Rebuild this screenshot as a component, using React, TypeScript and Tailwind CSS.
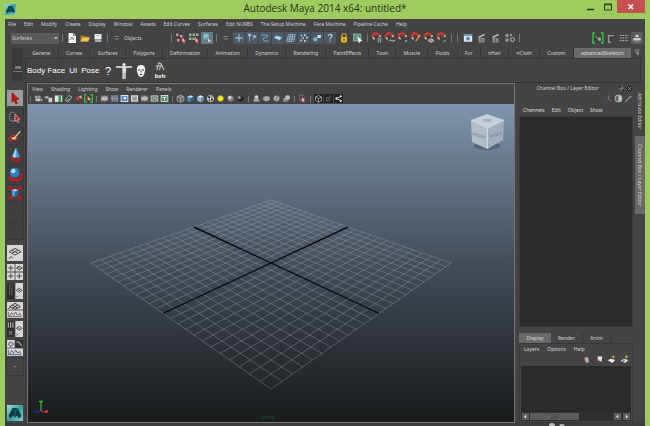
import type { ReactNode } from "react";

const menus = [
  "File", "Edit", "Modify", "Create", "Display", "Window", "Assets", "Edit Curves",
  "Surfaces", "Edit NURBS", "The Setup Machine", "Face Machine", "Pipeline Cache", "Help",
];

const shelfTabs = [
  "General", "Curves", "Surfaces", "Polygons", "Deformation", "Animation", "Dynamics",
  "Rendering", "PaintEffects", "Toon", "Muscle", "Fluids", "Fur", "nHair", "nCloth", "Custom",
];

/** Red horseshoe magnet shared by the snap icons */
const magnet = (
  <>
    <path d="M2.5 6.5 A3.2 3.2 0 0 1 7.5 2.5 L9 4.5" fill="none" stroke="#c43a31" strokeWidth="2.4" />
    <path d="M2 5.5l1.6 1.8M8.2 4.6l1.6-.8" stroke="#ddd" strokeWidth="1.2" />
  </>
);

const cube = (top: string, left: string, right: string) => (
  <>
    <path d="M6 1.5L10.5 3.5 6 5.5 1.5 3.5z" fill={top} />
    <path d="M1.5 3.5L6 5.5V11L1.5 8.8z" fill={left} />
    <path d="M10.5 3.5L6 5.5V11l4.5-2.2z" fill={right} />
  </>
);

const persp = (
  <g fill="none" stroke="#444" strokeWidth=".7">
    <path d="M1.5 5L6 2.5 10.5 5 6 7.5zM3.7 3.8L8.2 6.2M8.2 3.8L3.7 6.2" />
    <path d="M3 8.5l-1.5 2M3 8.5l1.5 1.5" />
  </g>
);

/** All icons are drawn on a 12x12 grid */
const icons: Record<string, ReactNode> = {
  newScene: (
    <>
      <path d="M2.5 1h5L10 3.5V11H2.5z" fill="#f2f2f2" />
      <path d="M7.5 1v2.5H10M4 8l2-3 1 2 1.5 1" fill="none" stroke="#555" strokeWidth=".8" />
    </>
  ),
  open: (
    <>
      <path d="M1.5 3.5h3l1 1h4v5h-8z" fill="#a67c1c" />
      <path d="M3.5 5.5H11L9 9.5H1.5z" fill="#edc552" />
    </>
  ),
  save: (
    <>
      <rect x="2.5" y="2" width="7" height="5.5" rx=".5" fill="#e8edf2" />
      <path d="M3 9h6.5" stroke="#b8bcc0" strokeWidth="1.8" />
      <path d="M3.5 3.5h4.5" stroke="#9aa" strokeWidth=".6" />
    </>
  ),
  grip: <path d="M3.5 4.5h4.5M3.5 7h4.5" stroke="#888" strokeWidth=".9" />,
  hierarchy: (
    <>
      <path d="M1 1.5h2.5V4H1zM5 3h2.5v2.5H5zM2 7h2.5v2.5H2z" fill="#d88f94" />
      <path d="M7 5l4 4-1.8.2 1 1.8-1.2.4-.8-1.7L7 10z" fill="#e6b3b3" stroke="#a33" strokeWidth=".5" />
    </>
  ),
  objectMode: (
    <>
      <path d="M1 1.5h2.5V4H1zM4.5 1.5H7V4H4.5zM8 1.5h2.5V4H8zM1 5.5h2.5V8H1zM4.5 5.5H7V8H4.5z" fill="#93b89a" />
      <path d="M7 5l4 4-1.8.2 1 1.8-1.2.4-.8-1.7L7 10z" fill="#e6b3b3" stroke="#a33" strokeWidth=".5" />
    </>
  ),
  component: (
    <>
      <circle cx="5" cy="4.5" r="3.2" fill="#5fa3b8" />
      <path d="M3 3h4M2.5 5h5" stroke="#d2eef5" strokeWidth=".8" />
      <path d="M6 5l4.5 4.5-2 .2L7.500 11z" fill="#eee" stroke="#355" strokeWidth=".4" />
    </>
  ),
  plus: <path d="M6 1.5v9M1.500 6h9" stroke="#8ab4d6" strokeWidth="1.6" />,
  joint: (
    <>
      <path d="M3 10V2.500L9.500 4L7 8" fill="none" stroke="#8ab4d6" strokeWidth="1" />
      <path d="M1.500 1h3v3h-3zM8 3h3v2.500H8z" fill="#a9cce8" />
    </>
  ),
  curve: <path d="M2 2.500h6c2 0 1 3-1.500 3S3 9.500 5.500 9.500H10" fill="none" stroke="#8ab4d6" strokeWidth="1.100" />,
  surface: <path d="M1 6l3-3 3.500 1L11 5.500 8 9 4.500 7.500z" fill="#a5d2f0" stroke="#4b7fa5" strokeWidth=".6" />,
  lattice: <path d="M3 2h8L9 10H1zM2.500 4.700h8M2 7.300h8M5.700 2l-2 8M8.300 2l-2 8" fill="none" stroke="#9cc4e4" strokeWidth=".9" />,
  particles: <path d="M2 2h2v2H2zM6 1.500h2v2H6zM4 5h2v2H4zM8.500 4.500h2v2h-2zM1.500 8h2v2h-2zM6 8.500h2v2H6z" fill="#b9dbf2" />,
  render: (
    <>
      <circle cx="4" cy="7.500" r="2.500" fill="#83b5d8" />
      <path d="M6.500 2.500h4v3.500h-4z" fill="#cfe3f2" />
    </>
  ),
  help: <path d="M3.800 4c0-3 4.600-3 4.600-.4C8.400 5.500 6 5.500 6 7.500M6 9v1.500" fill="none" stroke="#c4dcee" strokeWidth="1.300" />,
  lock: (
    <>
      <path d="M4 5.500V3.500a2 2 0 0 1 4 0v2" fill="none" stroke="#d9a520" strokeWidth="1.200" />
      <rect x="3" y="5" width="6" height="5.500" rx="1" fill="#e8b522" />
      <path d="M6 7v2" stroke="#5a4000" strokeWidth="1.100" />
    </>
  ),
  highlight: (
    <>
      <rect x="1.500" y="2" width="7.500" height="7" fill="#5f8f7c" stroke="#9cc" strokeWidth=".6" />
      <path d="M5 4l5.500 5-2.200.2L7 11.500z" fill="#f2f2f2" />
    </>
  ),
  snapGrid: <>{magnet}<path d="M6 7h5M6 9h5M7.500 5.500V11M9.500 5.500V11" stroke="#aaa" strokeWidth=".6" /></>,
  snapCurve: <>{magnet}<path d="M5 9c2-3 3 2 6-1" fill="none" stroke="#ccc" strokeWidth="1" /></>,
  snapPoint: <>{magnet}<circle cx="9" cy="9" r="1.100" fill="#7fb0dd" /></>,
  snapView: <>{magnet}<path d="M5 9l5-7 1 1-4.500 6.500z" fill="#d98c4a" /></>,
  snapPlane: <>{magnet}<path d="M5 8.500L8 6.500l3 2-3 2z" fill="#888" stroke="#ddd" strokeWidth=".7" /></>,
  makeLive: <>{magnet}<path d="M7 9.500l3-1" stroke="#999" strokeWidth="1" /></>,
  history: (
    <>
      <rect x="1" y="1.500" width="10" height="9" fill="#dce6ef" />
      <path d="M1 2.500h10" stroke="#4b78a8" strokeWidth="1.600" />
      <circle cx="6" cy="6.800" r="2.200" fill="#4f86b8" />
    </>
  ),
  clapper: (
    <>
      <path d="M2.500 6h6v4.500h-6z" fill="#888" />
      <path d="M2.500 5.500l6-3" stroke="#bbb" strokeWidth="1.500" />
      <path d="M5.500 7v2.500" stroke="#444" strokeWidth=".8" />
    </>
  ),
  settings: (
    <>
      <path d="M1.500 2h3v3h-3zM1.500 6.500h3v3h-3zM6 2h2v2H6z" fill="#999" />
      <circle cx="8.500" cy="7.500" r="2" fill="none" stroke="#bbb" strokeWidth="1" />
    </>
  ),
  bracket: (
    <>
      <path d="M3 1H1v10h2M9 1h2v10H9" fill="none" stroke="#25d43a" strokeWidth="1.300" />
      <path d="M3.500 4l5 5" stroke="#9a9" strokeWidth="1" />
      <circle cx="7.500" cy="7" r="1.700" fill="#9aa89a" />
    </>
  ),
  bracketRed: (
    <>
      <path d="M4 1H1v10h3M8 1h3v10H8" fill="none" stroke="#22e03c" strokeWidth="1.500" />
      <path d="M4 3h3v6H4z" fill="#d0423a" />
      <path d="M6 4l3 4H6z" fill="#eee" />
    </>
  ),
  panelA: <path d="M3 11V3h6.500M3 3v8h3" fill="none" stroke="#9a9a9a" strokeWidth="1.500" />,
  panelB: <path d="M1 3h10M1 6h10M1 9h10" stroke="#aaa" strokeWidth="1.200" strokeDasharray="2 1" />,
  panelC: (
    <>
      <path d="M4 2h4v3H4zM1.500 6h9v3h-9z" fill="#ccc" />
      <path d="M3 10.500h6" stroke="#999" />
    </>
  ),
  camera: (
    <>
      <circle cx="3" cy="4" r="2" fill="#aaa" />
      <circle cx="7" cy="4" r="2" fill="#999" />
      <path d="M2 6h6.500v3.500H2zM8.500 7.500L11 6v4z" fill="#c4c4c4" />
    </>
  ),
  cameraList: (
    <>
      <path d="M1 3h5v3H1z" fill="#aaa" />
      <path d="M6 5h5v6H6z" fill="#ccc" />
    </>
  ),
  book: (
    <>
      <rect x="1" y="2" width="10" height="8.500" fill="#dfe9df" />
      <path d="M6 2h3.500v8.500H6z" fill="#3d8f5a" />
    </>
  ),
  imagePlane: <path d="M1.500 8l5-6 4 2-4 6-4-.5zM4 8l4-1" fill="none" stroke="#9db59d" strokeWidth="1.200" />,
  pan: (
    <>
      <circle cx="5" cy="6" r="2.500" fill="#c2413a" />
      <path d="M6 3l4-1v5z" fill="#d6b6a6" />
    </>
  ),
  gridIcon: (
    <>
      <rect x="1" y="2" width="10" height="8" fill="#777" />
      <path d="M1.500 6L6 3.500 10.500 6 6 8.500zM3.500 5l5 2.300M8.500 5L3.500 7.300" fill="none" stroke="#eee" strokeWidth=".9" />
    </>
  ),
  filmGate: (
    <>
      <rect x="1" y="2" width="10" height="8" fill="#8aa0b8" />
      <path d="M1 4h10M1 8h10" stroke="#222" strokeWidth="1.100" strokeDasharray="1.500 1" />
    </>
  ),
  resGate: (
    <>
      <rect x="1.500" y="2" width="9" height="8" fill="#4b86c8" stroke="#d5e4f3" strokeWidth="1.300" />
      <path d="M5 4h3v3H5z" fill="#fff" />
    </>
  ),
  gateMask: <rect x="2" y="2.500" width="8" height="7" fill="#999" stroke="#ddd" strokeWidth="1.500" />,
  safeAction: (
    <>
      <rect x="1.500" y="2.500" width="9" height="7" fill="#557a68" stroke="#d5ddd5" strokeWidth="1.100" />
      <path d="M3 4l6 4M9 4L3 8" stroke="#d5ddd5" strokeWidth=".9" />
    </>
  ),
  safeTitle: (
    <>
      <rect x="1.500" y="2" width="9" height="8" fill="#4e8f62" stroke="#e3eee3" strokeWidth="1.100" />
      <path d="M3.500 4.500h5M6 4.500V8.500" stroke="#fff" strokeWidth="1.200" />
    </>
  ),
  wireCube: (
    <>
      {cube("#777", "#555", "#666")}
      <path d="M6 1.500L10.500 3.500V8.800L6 11 1.500 8.800V3.500zM1.500 3.500L6 5.500 10.500 3.500M6 5.500V11" fill="none" stroke="#c9c9c9" strokeWidth=".8" />
    </>
  ),
  blueCube: cube("#b9dcf5", "#4a8ec6", "#2d6596"),
  litCube: <>{cube("#e2f0fa", "#8ab8dd", "#5a8fb8")}<path d="M6 5.500V11" stroke="#eee" strokeWidth=".6" /></>,
  checker: (
    <>
      <circle cx="6" cy="6" r="4.500" fill="#ddd" />
      <path d="M3 3h2.500v2.500H3zM6.500 6H9v2.500H6.500zM7.500 2.500L9.500 4l-2 1zM3 8l2-1 1 3z" fill="#111" />
    </>
  ),
  lightYellow: <circle cx="6" cy="6" r="4" fill="#f2e933" stroke="#8a8520" strokeWidth="1" />,
  sphereGrey: <><circle cx="6" cy="6" r="4" fill="#888" /><circle cx="5" cy="4.500" r="2" fill="#ddd" /></>,
  sphereDark: <><circle cx="6" cy="6" r="4" fill="#222" /><circle cx="4.500" cy="4.500" r="2" fill="#999" /></>,
  motion: <><circle cx="6" cy="4" r="2.500" fill="#d4d4d4" /><path d="M1.500 10l2-4h5l2 4z" fill="#aaa" /></>,
  blob: <ellipse cx="6" cy="6" rx="4.500" ry="3.500" fill="#a5a5a5" />,
  blobHalf: <><circle cx="6" cy="6" r="4" fill="#aaa" /><path d="M4 10L8 2" stroke="#666" strokeWidth="1" /></>,
  stack: <><rect x="1.500" y="4.500" width="6" height="6" rx="2" fill="#888" /><rect x="4.500" y="1.500" width="6" height="6" rx="2" fill="#bbb" /></>,
  isolate: (
    <>
      <rect x="2" y="1.500" width="6" height="7" fill="none" stroke="#888" strokeWidth=".8" />
      <path d="M5 4l5 4.500-2.200.3.800 2-1.200.5-.8-2L5 10.500z" fill="#f0d6d6" stroke="#a33" strokeWidth=".7" />
    </>
  ),
  xray: <><rect width="12" height="12" fill="#222" /><path d="M6 2l4 2v5l-4 2-4-2V4zM2 4l4 2 4-2M6 6v5" fill="none" stroke="#bbb" strokeWidth="1" /></>,
  xrayJoint: <><rect width="12" height="12" fill="#222" /><path d="M3 5h4v4H3zM7 3h2.500" fill="none" stroke="#888" strokeWidth="1" /></>,
  share: <><rect width="12" height="12" fill="#222" /><path d="M9 3L3.500 6 9 9" fill="none" stroke="#ddd" strokeWidth="1.200" /><circle cx="9" cy="3" r="1.500" fill="#ddd" /><circle cx="3.500" cy="6" r="1.700" fill="#ddd" /><circle cx="9" cy="9" r="1.500" fill="#ddd" /></>,
  // toolbox
  arrow: <path d="M3.700 2L9 7l-2.300.2 1.200 2.700-1.400.6-1.200-2.700L3.700 9.300z" fill="#c4161c" stroke="#7a0c10" strokeWidth=".4" />,
  lasso: (
    <>
      <path d="M2 3.500L4.500 2 6.500 4 5 9.500 2 8.500z" fill="none" stroke="#ccc" strokeWidth=".5" strokeDasharray="1 .7" />
      <path d="M6 4l3.800 3.500-1.700.2.900 2-1.100.4-.8-1.900L6 9.300z" fill="#c4161c" stroke="#eee" strokeWidth=".4" />
    </>
  ),
  paint: (
    <>
      <path d="M1.500 8.500c1-3 3-3.500 5-2.500 2 .8 1 3-1.500 3.200S3 10 1.500 8.500z" fill="#5a2320" stroke="#b7302a" strokeWidth="1.200" />
      <path d="M5.500 7.500L10 2.500" stroke="#e0d5a0" strokeWidth=".9" />
      <path d="M3.500 7h3v1.500h-3z" fill="#d8e0b8" />
    </>
  ),
  move: (
    <>
      <path d="M3 8l4 2.800M10 8.800L7 10.800" stroke="#c4161c" strokeWidth="1.600" />
      <path d="M6.800.5L9.500 7C9 8.500 5 8.500 4 7z" fill="#4a9be0" />
      <path d="M6.800.5L6.500 7.800C5.500 8 4.500 7.800 4 7z" fill="#a5d4f7" />
    </>
  ),
  rotate: (
    <>
      <path d="M1.500 7.500c1 3.500 6.500 4.500 9 1.500L11 5.500M3 10.500h4" fill="none" stroke="#c4161c" strokeWidth="1.700" />
      <circle cx="5.700" cy="5" r="3.700" fill="#2f7fc4" />
      <circle cx="4.700" cy="3.800" r="1.700" fill="#b5dcf8" />
    </>
  ),
  scale: (
    <>
      <path d="M1 1l3 .3L1.300 4zM11 1l-3 .3L10.700 4zM1 11l3-.3L1.300 8zM11 11l-3-.3L10.700 8z" fill="#c4161c" />
      <path d="M2 2l8 8M10 2l-8 8" stroke="#c4161c" strokeWidth="1.500" />
      <path d="M3.500 4L6 3l2.500 1L6 5z" fill="#b5dcf8" />
      <path d="M3.500 4L6 5v4L3.800 7.800z" fill="#4a9be0" />
      <path d="M8.500 4L6 5v4l2.200-1.200z" fill="#24649c" />
    </>
  ),
  // quick layouts
  single: <><rect width="12" height="12" fill="#d6d6d6" />{persp}</>,
  four: (
    <>
      <path d="M0 0h5.700v5.700H0zM6.300 0H12v5.700H6.300zM0 6.300h5.700V12H0zM6.300 6.300H12V12H6.300z" fill="#d6d6d6" />
      <path d="M2.800 1v4M.8 3h4M2.800 7v4M.8 9h4M9.200 7v4M7.200 9h4M7 3l2.200-1.500L11.500 3 9.200 4.500zM8 2.200l2.300 1.500" fill="none" stroke="#333" strokeWidth=".6" />
    </>
  ),
  outliner: (
    <>
      <rect width="5.500" height="12" fill="#2b2b2b" />
      <path d="M2 1v8M3.700 1v8" stroke="#aaa" strokeWidth=".6" strokeDasharray=".8 .7" />
      <rect x="6.300" width="5.700" height="12" fill="#d6d6d6" />
      <path d="M7 5.500L9.200 4l2.200 1.500L9.200 7zM8 4.800l2.300 1.500M8 9.500l-.8 1.300" fill="none" stroke="#444" strokeWidth=".6" />
    </>
  ),
  graph: (
    <>
      <rect width="12" height="5.700" fill="#d6d6d6" />
      <path d="M2 3.500L6 1l4 2.500-4 2zM4 2.300l4 2.300M8 2.300L4 4.600M1 5l1.500-1" fill="none" stroke="#333" strokeWidth=".7" />
      <rect y="6.300" width="12" height="5.700" fill="#d6d6d6" />
      <path d="M1 11V7.500M1 11h10M2 10.500l1.500-2.500 1.500 2 1.500-2.500 1.500 2.500 1.500-1.500 1 2" fill="none" stroke="#64495c" strokeWidth=".6" />
    </>
  ),
  script: (
    <>
      <rect width="5.500" height="12" fill="#303030" />
      <path d="M1 1v4M2.700 1v4M4.400 1v4" stroke="#ccc" strokeWidth=".7" />
      <path d="M1.500 7.500l2.500 3M4 7.500l-2.500 3" stroke="#9ab" strokeWidth=".6" />
      <rect x="6.300" width="5.700" height="12" fill="#d6d6d6" />
      <path d="M7 5.500L9.200 4l2.200 1.500L9.200 7zM8 4.800l2.300 1.500M8 9.500l-.8 1.300" fill="none" stroke="#444" strokeWidth=".6" />
    </>
  ),
  hyper: (
    <>
      <rect width="5.700" height="5.700" fill="#d6d6d6" />
      <path d="M.8 3L2.800 1.500 5 3 2.800 4.500zM2.800 4.500V5.500" fill="none" stroke="#333" strokeWidth=".6" />
      <rect x="6.300" width="5.700" height="5.700" fill="#303030" />
      <path d="M7 1.500h2l2 3" fill="none" stroke="#bbb" strokeWidth=".8" />
      <rect y="6.300" width="12" height="5.700" fill="#d6d6d6" />
      <path d="M1 11V7.500M1 11h10M2 10.500l1.500-2.500 1.500 2 1.500-2.500 1.500 2.500 1.500-1.500 1 2" fill="none" stroke="#34496c" strokeWidth=".6" />
    </>
  ),
  more: <path d="M5 5.500h2L6 6.500z" fill="#999" />,
  // layer editor
  layerUp: <><path d="M1 2l2 3M2 1v5" stroke="#a3222a" strokeWidth="1.500" /><path d="M4.500 3h5l1.500 7H6z" fill="#b5b5b5" stroke="#666" strokeWidth=".6" /></>,
  layerDown: <><path d="M1.500 4v6M3 8l-1.500 2" stroke="#a3222a" strokeWidth="1.500" /><path d="M5 2h6l-1 7-5-2z" fill="#e5e5e5" /><path d="M4 6h3v3" fill="#888" /></>,
  layerNew: <><path d="M1 7L5 5l6 1.500-4 4z" fill="#ececec" /><path d="M8.500 0l.8 1.700 1.700.8-1.700.8-.8 1.700-.8-1.700L6 2.500l1.700-.8z" fill="#efae3a" /></>,
  layerSel: <><path d="M1 7.500L5 5l6 1.500-4 4z" fill="#ececec" /><circle cx="5" cy="7.500" r="1.500" fill="#4a7fa8" /><path d="M8.500 0l.8 1.700 1.700.8-1.700.8-.8 1.700-.8-1.700L6 2.500l1.700-.8z" fill="#efae3a" /></>,
  // channel box
  manipulator: (
    <>
      <path d="M6 2v5" stroke="#3a9a50" strokeWidth="1.500" />
      <path d="M6 7l4 3" stroke="#c8352e" strokeWidth="1.500" />
      <path d="M6 7L2 9" stroke="#345a9a" strokeWidth="1.200" />
    </>
  ),
  half: <><circle cx="6" cy="6" r="4.700" fill="#666" stroke="#bbb" strokeWidth="1.200" /><path d="M6 2v8a4 4 0 0 0 0-8z" fill="#ccc" /></>,
  pencil: <path d="M1.500 10.500L9 3M7.500 2.500l2.500 2" stroke="#9a9a9a" strokeWidth="1.400" />,
};

function Icon({ name, size = "size-3" }: { name: string; size?: string }) {
  return (
    <svg viewBox="0 0 12 12" className={`${size} shrink-0`} aria-hidden="true">
      {icons[name]}
    </svg>
  );
}

function ToolButton({ name, size, className = "" }: { name: string; size?: string; className?: string }) {
  return (
    <button type="button" aria-label={name} className={`flex shrink-0 items-center justify-center ${className}`}>
      <Icon name={name} size={size} />
    </button>
  );
}

function Sep({ height = "h-2" }: { height?: string }) {
  return <span className={`mx-[2px] w-px shrink-0 bg-[#777] ${height}`} />;
}

function MayaLogo({ className }: { className: string }) {
  return (
    <svg viewBox="0 0 16 16" className={className} aria-hidden="true">
      <defs>
        <linearGradient id="maya" x1="0" y1="0" x2="1" y2="1">
          <stop offset="0" stopColor="#a7dcd8" />
          <stop offset=".5" stopColor="#2fa3a0" />
          <stop offset="1" stopColor="#8ccfca" />
        </linearGradient>
      </defs>
      <rect width="16" height="16" fill="url(#maya)" />
      <path d="M1.500 11L5.500 3h5L14.500 11l-2.500 2.500-1.700-3L8 12.500 5.700 10.500 4 13.500z" fill="#0d3b42" />
      <path d="M5.500 3L8 7l2.500-4M8 7v5" fill="none" stroke="#1f7376" strokeWidth=".8" />
    </svg>
  );
}

/** Projects a floor point (-1..1 on both axes) to the viewport */
function floorPoint(u: number, v: number) {
  const s = u + v;
  const w = 1 - s / 6;
  const x = 243 + (90 * (u - v)) / w;
  const y = (263 - 1.83 * s) / w - 104;
  return `${x.toFixed(2)} ${y.toFixed(2)}`;
}

function Scene() {
  const steps = Array.from({ length: 25 }, (_, i) => (i - 12) / 12);
  const grid = steps
    .map((t) => `M${floorPoint(t, -1)}L${floorPoint(t, 1)}M${floorPoint(-1, t)}L${floorPoint(1, t)}`)
    .join("");
  const axis = `M${floorPoint(0, -1)}L${floorPoint(0, 1)}M${floorPoint(-1, 0)}L${floorPoint(1, 0)}`;

  return (
    <svg viewBox="0 0 486 318" className="h-full w-full" role="img" aria-label="Perspective view">
      <path d={grid} fill="none" stroke="#a9b1b8" strokeOpacity=".48" strokeWidth=".7" />
      <path d={axis} fill="none" stroke="#080c16" strokeWidth="1.400" />

      {/* View cube */}
      <ellipse cx="459" cy="42" rx="13" ry="4" fill="#3f4c5c" opacity=".5" />
      <path d="M459 10L476 16 459.500 24 443 16z" fill="#c6ced8" />
      <path d="M443 16L459.500 24V45L444 38z" fill="#b3bdc9" />
      <path d="M476 16L459.500 24V45L475 36z" fill="#a3aebc" />
      <path d="M443 16L459.500 24 476 16M459.500 24V45" fill="none" stroke="#e0e5ea" strokeWidth=".8" />
      <g fill="#66717f" fontFamily="Liberation Sans, sans-serif" fontSize="4" textAnchor="middle">
        <text x="459" y="18">TOP</text>
        <text x="451" y="33" transform="rotate(16 451 32)">FRONT</text>
        <text x="468" y="32" transform="rotate(-20 468 31)">RIGHT</text>
      </g>

      {/* Origin axis */}
      <path d="M13 307V298" stroke="#35c22d" strokeWidth="1.200" />
      <path d="M11 297.500h4" stroke="#35c22d" strokeWidth="1.500" />
      <path d="M13 307l5 1.500" stroke="#c93030" strokeWidth="1" />
      <circle cx="18.500" cy="307.500" r="1.600" fill="#d23a36" />
      <path d="M13 307l-5 1" stroke="#2430a0" strokeWidth="1" />
      <circle cx="7.500" cy="307" r="1.700" fill="#1b2580" />
      <text x="240" y="315" fill="#14532d" fontSize="5" fontFamily="Noto Sans, sans-serif" textAnchor="middle">persp</text>
    </svg>
  );
}

function TitleBar() {
  return (
    <header className="flex h-[19px] items-start">
      <div className="flex flex-1 pt-1">
        <MayaLogo className="size-[11px]" />
      </div>
      <h1 className="font-['Open_Sans',sans-serif] text-[10px] leading-4 text-[#26331a]">
        Autodesk Maya 2014 x64: untitled*
      </h1>
      <div className="flex flex-1 justify-end">
        <button type="button" aria-label="Minimize" className="flex h-[13px] w-4 items-center justify-center">
          <svg viewBox="0 0 8 8" className="size-2"><path d="M0 6.500h7" stroke="#26331a" strokeWidth="1.500" /></svg>
        </button>
        <button type="button" aria-label="Maximize" className="flex h-[13px] w-[18px] items-center justify-center">
          <svg viewBox="0 0 8 8" className="size-2">
            <path d="M.5 1h7v6h-7zM.5 1.800h7" fill="none" stroke="#26331a" />
          </svg>
        </button>
        <button type="button" aria-label="Close" className="flex h-[13px] w-7 items-center justify-center bg-[#c75050]">
          <svg viewBox="0 0 8 8" className="size-2"><path d="M1.500 1.500l4.500 4.500M6 1.500L1.500 6" stroke="#fff" strokeWidth="1.500" /></svg>
        </button>
      </div>
    </header>
  );
}

function StatusLine() {
  return (
    <div className="flex h-[18px] items-center gap-px pl-[6px]">
      <div className="grid h-[11px] w-12 shrink-0 items-center bg-[#5b5b5b]">
        <select aria-label="Menu set" className="col-start-1 row-start-1 h-[11px] appearance-none pl-px leading-[11px] text-[#ccc]">
          <option>Surfaces</option>
        </select>
        <svg viewBox="0 0 6 6" className="pointer-events-none col-start-1 row-start-1 size-[6px] justify-self-end">
          <path d="M1 2h4L3 4.500z" fill="#bbb" />
        </svg>
      </div>
      <Sep />
      <ToolButton name="newScene" />
      <ToolButton name="open" />
      <ToolButton name="save" />
      <Sep />
      <Icon name="grip" />
      <span className="w-11 shrink-0">Objects</span>
      <Sep />
      <ToolButton name="hierarchy" />
      <ToolButton name="objectMode" />
      <ToolButton name="component" className="bg-[#6b7b80]" />
      <Sep />
      <Icon name="grip" />
      {["plus", "joint", "curve", "surface", "lattice", "particles", "render", "help"].map((name) => (
        <ToolButton key={name} name={name} size="size-[10px]" className="size-3 bg-[#4e5862]" />
      ))}
      <ToolButton name="lock" className="w-[13px]" />
      <ToolButton name="highlight" className="w-[13px]" />
      <Sep />
      {["snapGrid", "snapCurve", "snapPoint", "snapView", "snapPlane", "makeLive"].map((name) => (
        <ToolButton key={name} name={name} />
      ))}
      <Sep />
      <Sep />
      <ToolButton name="history" size="size-[10px]" className="w-[13px]" />
      <ToolButton name="clapper" className="w-[13px]" />
      <ToolButton name="clapper" className="w-[13px]" />
      <ToolButton name="settings" className="w-[13px]" />
      <Sep />
      <div className="ml-auto flex gap-px pr-[2px]">
        <ToolButton name="bracket" />
        <ToolButton name="panelA" size="size-[10px]" className="size-3" />
        <ToolButton name="panelB" size="size-[10px]" className="size-3" />
        <ToolButton name="panelC" size="size-[10px]" className="size-3 bg-[#5a5a5a]" />
      </div>
    </div>
  );
}

function Shelf() {
  return (
    <div className="flex h-9 gap-[2px] pl-[7px] pr-1 pt-px">
      <div className="mb-[2px] flex w-[11px] flex-col items-center justify-center gap-[2px] bg-[#393939] pt-2">
        <span className="h-[3px] w-[6px] bg-[#777]" />
        <span className="h-px w-[9px] bg-[#777]" />
      </div>
      <div className="flex min-w-0 flex-1 flex-col">
        <div className="flex h-[10px] items-stretch gap-[2px]">
          <div className="flex flex-1">
            {shelfTabs.map((tab) => (
              <button type="button" key={tab} className="flex-auto border-r border-[#363636] px-1">
                {tab}
              </button>
            ))}
            <button type="button" className="flex-auto bg-[#6a6a6a] px-1 text-[#ddd]">advancedSkeleton</button>
          </div>
          <svg viewBox="0 0 8 8" className="size-2">
            <path d="M1 2h6M2.500 4h3v3z" fill="#999" stroke="#888" />
          </svg>
        </div>
        <div className="flex flex-1 items-center gap-1 border border-[#363636] border-b-[#333] pl-px font-['Liberation_Sans',sans-serif] text-[8px] leading-[10px] text-white">
          <button type="button">Body Face</button>
          <button type="button">UI</button>
          <button type="button">Pose</button>
          <button type="button" className="w-[9px] text-[11px]">?</button>
          <button type="button" aria-label="Body setup">
            <svg viewBox="0 0 16 18" className="h-[18px] w-4">
              <circle cx="8" cy="2.500" r="1.600" fill="#eee" />
              <path d="M0 5h16M8 4v7M7.200 10v7M9 10v7" stroke="#eee" strokeWidth="1.300" />
              <path d="M6 5h4.500l-.7 6h-3z" fill="#ddd" />
            </svg>
          </button>
          <button type="button" aria-label="Face setup">
            <svg viewBox="0 0 10 14" className="h-[14px] w-[10px]">
              <path d="M5 1c5 0 4.500 5 3.500 8C8 11.500 6.500 13 5 13s-3-1.500-3.500-4C.5 6 0 1 5 1z" fill="#f2f2f2" />
              <path d="M2 6h2.200M5.800 6H8M3.800 10.500h2.400M5 7v1.500" stroke="#333" strokeWidth="1" />
            </svg>
          </button>
          <button type="button" className="ml-1 flex flex-col items-center text-[6px] font-bold leading-[6px]">
            <svg viewBox="0 0 12 12" className="size-[11px]">
              <path d="M4 1.500c3-1 5 1 5 3.500M2 5c2-2 5-2 7 0L11 9M5 3L3 9M7 4l-1 5" fill="none" stroke="#ccc" strokeWidth="1.100" />
            </svg>
            bvh
          </button>
        </div>
      </div>
    </div>
  );
}

function Toolbox() {
  return (
    <aside className="flex w-5 shrink-0 flex-col items-center gap-[3px] pb-[2px] pt-[7px]">
      <ToolButton name="arrow" size="size-4" className="bg-[#9b9b9b]" />
      {["lasso", "paint", "move", "rotate", "scale", "blank", "lastTool"].map((name) => (
        <ToolButton key={name} name={name} size="size-4" className="bg-[#404040] outline outline-[#383838]" />
      ))}
      <div className="mt-[3px] flex flex-col gap-[3px]">
        {["single", "four", "outliner", "graph", "script", "hyper"].map((name) => (
          <ToolButton key={name} name={name} size="size-4" />
        ))}
        <ToolButton name="more" size="size-4" className="outline outline-[#383838]" />
      </div>
      <MayaLogo className="mt-auto size-4" />
    </aside>
  );
}

const panelTools = [
  ["camera", "cameraList", "book", "imagePlane", "pan", "bracketRed"],
  ["gridIcon", "filmGate", "resGate", "gateMask", "gridIcon", "safeAction", "safeTitle"],
  ["wireCube", "blueCube", "litCube", "checker", "lightYellow", "sphereGrey", "sphereDark"],
  ["motion", "blob", "blobHalf", "stack"],
  ["isolate"],
  ["xray", "xrayJoint", "share"],
];

function ViewPanel() {
  return (
    <main className="flex min-w-0 flex-1 flex-col border border-[#777]">
      <nav className="flex h-[9px] items-center gap-2 pl-1">
        {["View", "Shading", "Lighting", "Show", "Renderer", "Panels"].map((item) => (
          <button type="button" key={item}>{item}</button>
        ))}
      </nav>
      <div className="flex h-[11px] items-center gap-px">
        {panelTools.map((group, i) => (
          <div key={i} className="flex items-center gap-px">
            <Sep height="h-[6px]" />
            {group.map((name, j) => (
              <ToolButton key={j} name={name} size="size-[9px]" />
            ))}
          </div>
        ))}
      </div>
      <div className="min-h-0 flex-1 bg-linear-to-b from-[#8095ae] via-[#454d59] to-[#191b1c]">
        <Scene />
      </div>
    </main>
  );
}

function ScrollArrow({ flip = false }: { flip?: boolean }) {
  return (
    <button type="button" aria-label={flip ? "Scroll right" : "Scroll left"} className="flex size-[7px] items-center justify-center bg-[#5c5c5c]">
      <svg viewBox="0 0 6 6" className="size-[5px]">
        <path d={flip ? "M2 1v4l3-2z" : "M4 1v4L1 3z"} fill="#ddd" />
      </svg>
    </button>
  );
}

function ChannelBox() {
  return (
    <section className="flex w-[120px] shrink-0 flex-col pl-1 pr-[2px]">
      <div className="flex h-[10px] items-center justify-end gap-[3px] pr-px">
        <h2 className="flex-1 text-center">Channel Box / Layer Editor</h2>
        <button type="button" aria-label="Float" className="size-[5px] bg-[#222]">
          <svg viewBox="0 0 6 6"><path d="M1 2.500h3V5H1zM2.500 1H5v2.500" fill="none" stroke="#999" /></svg>
        </button>
        <button type="button" aria-label="Close panel" className="size-[5px] bg-[#222]">
          <svg viewBox="0 0 6 6"><path d="M1 1l4 4M5 1L1 5" stroke="#aaa" /></svg>
        </button>
      </div>
      <div className="flex h-[11px] items-center justify-end gap-px">
        <ToolButton name="manipulator" size="size-[9px]" />
        <ToolButton name="half" size="size-[9px]" />
        <ToolButton name="pencil" size="size-[9px]" />
      </div>
      <nav className="flex h-3 items-center gap-[7px] pl-1 text-[#ddd]">
        {["Channels", "Edit", "Object", "Show"].map((item) => (
          <button type="button" key={item}>{item}</button>
        ))}
      </nav>
      <div className="min-h-[210px] flex-1 border border-[#383838] bg-[#2b2b2b]" />

      <div className="mt-[6px] flex h-[10px]">
        <button type="button" className="w-8 bg-[#686868] text-[#ddd]">Display</button>
        <button type="button" className="w-8 border-r border-[#363636]">Render</button>
        <button type="button" className="w-7 border-r border-[#363636]">Anim</button>
      </div>
      <div className="flex flex-col border border-[#393939] px-px pb-px">
        <nav className="flex h-[9px] items-center gap-2 pl-[3px]">
          {["Layers", "Options", "Help"].map((item) => (
            <button type="button" key={item}>{item}</button>
          ))}
        </nav>
        <div className="flex h-[13px] items-center justify-end gap-1 pr-[2px]">
          {["layerUp", "layerDown", "layerNew", "layerSel"].map((name) => (
            <ToolButton key={name} name={name} size="size-[9px]" />
          ))}
        </div>
        <div className="h-[46px] bg-[#2b2b2b]" />
        <div className="flex h-[9px] items-center gap-px bg-[#303030] px-px">
          <ScrollArrow />
          <div className="flex h-[7px] w-[49px] items-center justify-center bg-[#5c5c5c]">
            <svg viewBox="0 0 10 6" className="h-[5px] w-[10px]">
              <path d="M1 0v6M3 0v6M5 0v6M7 0v6M9 0v6" stroke="#484848" />
            </svg>
          </div>
          <div className="ml-auto flex gap-[2px]">
            <ScrollArrow />
            <ScrollArrow flip />
          </div>
        </div>
      </div>
    </section>
  );
}

export default function App() {
  return (
    <div className="flex min-h-screen flex-col bg-[#9fcc5f] px-[5px] font-['Noto_Sans',sans-serif] text-[5px] leading-[8px] text-[#d2d2d2]">
      <TitleBar />
      <div className="flex flex-1 flex-col bg-[#444]">
        <nav className="flex h-[10px] items-center gap-2 pl-[3px]">
          {menus.map((menu) => (
            <button type="button" key={menu} className="shrink-0">{menu}</button>
          ))}
        </nav>
        <StatusLine />
        <Shelf />
        <div className="flex flex-1">
          <Toolbox />
          <div className="w-[2px] shrink-0 bg-[#3a3a3a]" />
          <ViewPanel />
          <ChannelBox />
          <aside className="flex w-[10px] shrink-0 flex-col pt-1">
            <button type="button" className="h-[49px] [writing-mode:vertical-rl]">Attribute Editor</button>
            <button type="button" className="h-[78px] bg-[#686868] [writing-mode:vertical-rl]">
              Channel Box / Layer Editor
            </button>
          </aside>
        </div>
        <footer className="flex h-[3px] justify-end overflow-hidden bg-[#3c3c3c] pr-20">
          <span className="size-[6px] rounded-full bg-[#bbb]" />
          <span className="ml-1 mt-px size-[6px] rounded-full bg-[#bbb]" />
        </footer>
      </div>
    </div>
  );
}
